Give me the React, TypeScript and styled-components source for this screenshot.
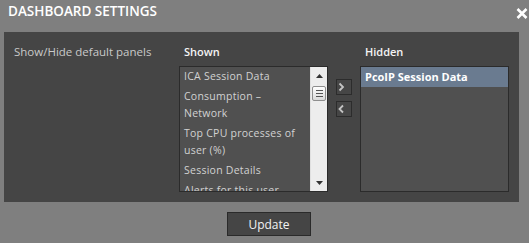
import React from 'react'
import styled, { createGlobalStyle } from 'styled-components'

const GlobalStyle = createGlobalStyle`
  html, body {
    margin: 0;
    padding: 0;
    background: #7f7f7f;
    font-family: 'Open Sans', 'DejaVu Sans', sans-serif;
  }
`

const shownPanels = ['ICA Session Data', 'Consumption – Network', 'Top CPU processes of user (%)', 'Session Details', 'Alerts for this user']
const hiddenPanels = ['PcoIP Session Data']

const Dialog = styled.div`
  width: 529px;
  height: 243px;
  display: flex;
  flex-direction: column;
`

const Header = styled.header`
  height: 32px;
  box-sizing: border-box;
  padding: 1px 1px 0 8px;
  display: flex;
  justify-content: space-between;
  align-items: flex-start;
`

const Title = styled.h1`
  margin: 0;
  font-size: 13.5px;
  font-weight: 600;
  line-height: 20px;
  color: #ffffff;
`

const Close = styled.button`
  margin-top: 7px;
  padding: 0;
  border: 0;
  background: none;
  width: 12px;
  height: 11px;
  display: flex;
  cursor: pointer;
`

const Panel = styled.section`
  margin-left: 4px;
  width: 515px;
  height: 170px;
  box-sizing: border-box;
  padding: 12px 10px 10px 10px;
  background: #454545;
  display: flex;
`

const Label = styled.div`
  width: 165px;
  font-size: 11.5px;
  line-height: 16px;
  color: #c9c9c9;
`

const Column = styled.div`
  width: 149px;
  display: flex;
  flex-direction: column;
`

const Heading = styled.div`
  padding-left: 5px;
  margin-bottom: 6px;
  font-size: 11px;
  font-weight: 600;
  line-height: 16px;
  color: #f4f4f4;
`

const Box = styled.div`
  height: 126px;
  box-sizing: border-box;
  border: 1px solid #2b2b2b;
  background: #505050;
  display: flex;
  overflow: hidden;
`

const Items = styled.ul`
  list-style: none;
  margin: 0;
  padding: 0;
  flex: 1;
  overflow: hidden;
`

const Item = styled.li<{ $selected?: boolean }>`
  padding: ${(p) => (p.$selected ? '1px 4px 2px' : '1px 14px 2px 4px')};
  font-size: ${(p) => (p.$selected ? '11px' : '10.5px')};
  font-weight: ${(p) => (p.$selected ? 700 : 400)};
  letter-spacing: ${(p) => (p.$selected ? '0' : '0.25px')};
  line-height: 17px;
  color: ${(p) => (p.$selected ? '#ffffff' : '#d2d2d2')};
  background: ${(p) => (p.$selected ? '#6a7b90' : 'transparent')};
`

const Scrollbar = styled.div`
  width: 17px;
  box-sizing: border-box;
  border-left: 1px solid #e0e0e0;
  background: #ededed;
  display: flex;
  flex-direction: column;
  align-items: center;
`

const ScrollArrow = styled.div`
  height: 17px;
  display: flex;
  align-items: center;
  justify-content: center;
`

const Thumb = styled.div`
  margin-top: 2px;
  width: 14px;
  height: 15px;
  box-sizing: border-box;
  border: 1px solid #8e8e8e;
  border-radius: 2px;
  background: linear-gradient(#ffffff, #dadada);
  display: flex;
  flex-direction: column;
  align-items: center;
  justify-content: center;
  gap: 2px;
`

const Grip = styled.span`
  width: 7px;
  height: 1px;
  background: #555;
`

const Track = styled.div`
  flex: 1;
`

const Mover = styled.div`
  width: 16px;
  padding: 35px 8px 0;
  display: flex;
  flex-direction: column;
  gap: 6px;
`

const MoveButton = styled.button`
  width: 16px;
  height: 16px;
  padding: 0;
  box-sizing: border-box;
  border: 1px solid #2c2c2c;
  background: #464646;
  display: flex;
  cursor: pointer;
`

const Footer = styled.div`
  margin-top: 10px;
  padding-left: 9px;
  display: flex;
  justify-content: center;
`

const UpdateButton = styled.button`
  width: 84px;
  height: 24px;
  box-sizing: border-box;
  border: 1px solid #2a2a2a;
  background: #454545;
  color: #f2f2f2;
  font-family: 'Open Sans', 'DejaVu Sans', sans-serif;
  font-size: 12px;
  padding: 0;
  cursor: pointer;
`

const Chevron = ({ dir }: { dir: 'left' | 'right' }) => (
  <svg width="14" height="14" viewBox="0 0 14 14">
    <path
      d={dir === 'right' ? 'M2.5 3.5 L6 7 L2.5 10.5' : 'M6 3.5 L2.5 7 L6 10.5'}
      fill="none"
      stroke="#c4c4c4"
      strokeWidth="1.8"
    />
  </svg>
)

const Triangle = ({ up }: { up?: boolean }) => (
  <svg width="7" height="4" viewBox="0 0 7 4">
    <path d={up ? 'M0 4 L3.5 0 L7 4 Z' : 'M0 0 L7 0 L3.5 4 Z'} fill="#333" />
  </svg>
)

const App = () => {
  return (
    <>
      <GlobalStyle />
      <Dialog>
        <Header>
          <Title>DASHBOARD SETTINGS</Title>
          <Close aria-label="close">
            <svg width="12" height="11" viewBox="0 0 12 11">
              <path d="M1.5 1 L10.5 10 M10.5 1 L1.5 10" stroke="#ffffff" strokeWidth="2.6" />
            </svg>
          </Close>
        </Header>
        <Panel>
          <Label>Show/Hide default panels</Label>
          <Column>
            <Heading>Shown</Heading>
            <Box>
              <Items>
                {shownPanels.map((item) => (
                  <Item key={item}>{item}</Item>
                ))}
              </Items>
              <Scrollbar>
                <ScrollArrow>
                  <Triangle up />
                </ScrollArrow>
                <Thumb>
                  <Grip />
                  <Grip />
                  <Grip />
                </Thumb>
                <Track />
                <ScrollArrow>
                  <Triangle />
                </ScrollArrow>
              </Scrollbar>
            </Box>
          </Column>
          <Mover>
            <MoveButton aria-label="hide">
              <Chevron dir="right" />
            </MoveButton>
            <MoveButton aria-label="show">
              <Chevron dir="left" />
            </MoveButton>
          </Mover>
          <Column>
            <Heading>Hidden</Heading>
            <Box>
              <Items>
                {hiddenPanels.map((item) => (
                  <Item key={item} $selected>
                    {item}
                  </Item>
                ))}
              </Items>
            </Box>
          </Column>
        </Panel>
        <Footer>
          <UpdateButton>Update</UpdateButton>
        </Footer>
      </Dialog>
    </>
  )
}

export default App
